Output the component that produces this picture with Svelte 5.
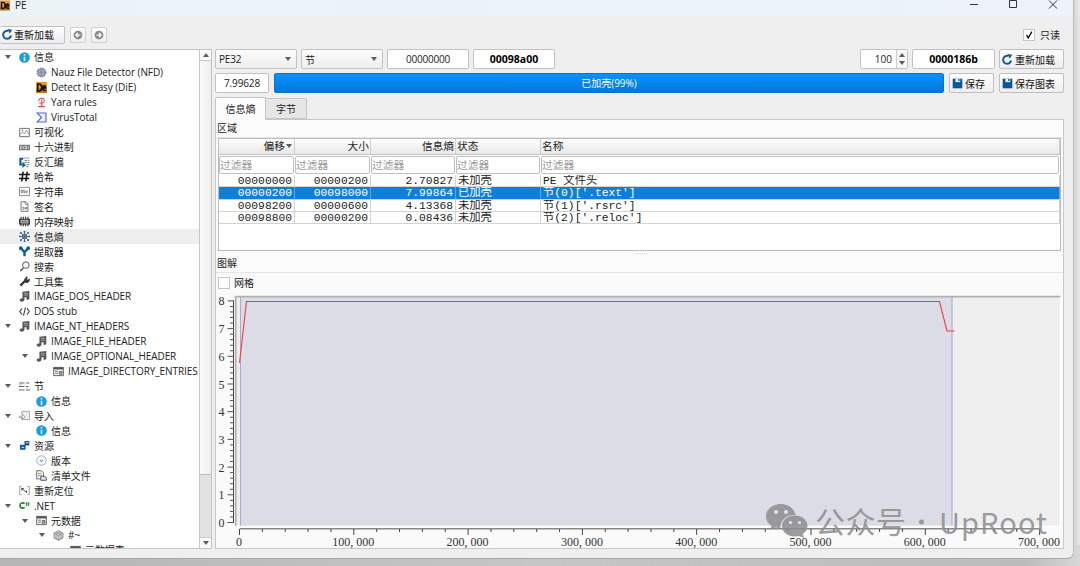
<script lang="ts">
  type Row = { t: string; icon: string; l?: number; open?: boolean; active?: boolean };

  const gear =
    '<circle cx="8" cy="8" r="5.5" fill="none" stroke="#8089a6" stroke-width="3.6" stroke-dasharray="2 .9"/><circle cx="8" cy="8" r="5" fill="#ccd1df" stroke="#56638b"/><circle cx="8" cy="8" r="2.4" fill="none" stroke="#56638b"/><path d="M8 3v10M3 8h10M4.5 4.5l7 7M11.5 4.5l-7 7" stroke="#6b7799" stroke-width=".6"/>';
  const header =
    '<path d="M5 1l10-1v12l-4 1V9H8v3c0 2-2 3.500-4 3.500S.8 14 1 12.700 3 11 5 11z" fill="#555"/><path d="M7 3.500h6M7 6h6" stroke="#aaa" stroke-width="1.300"/>';
  const table =
    '<path d="M1 2h14v12H1z" fill="#f4f4f4" stroke="#555" stroke-width="1.300"/><path d="M1 2h14v3H1z" fill="#555"/><path d="M3 7.500h4M3 10.500h4M9 8h4v4H9zM9 10h4" stroke="#555" fill="none" stroke-width="1.200"/>';
  const icons: Record<string, string> = {
    info: '<circle cx="8" cy="8" r="7.700" fill="#169fe6"/><path d="M8 7v6M8 3v2.200" stroke="#fff" stroke-width="2.200"/>',
    gear,
    header,
    table,
    die: '<path d="M0 0h16v16H0z" fill="#e99b20"/><path d="M0 9h16v7H0z" fill="#9b5610" opacity=".45"/><path d="M2.500 3v10h2c5 0 5-10 0-10zM10 8.500h4c0-4-4.500-3.500-4.500 0s2 4.500 5 3.500" fill="none" stroke="#150e04" stroke-width="2.300"/>',
    yara: '<path d="M4 6c0-6 9-5 8 0-1 3-6 4-7 2M9 3c-3 3 2 6-1 9M3 14h10M7 11l3 3" fill="none" stroke="#d45050" stroke-width="1.500"/>',
    vt: '<path d="M1.500 1.500h13v13h-13L8 8z" fill="#eef1ff" stroke="#5068ee" stroke-width="1.700"/>',
    picture: '<path d="M1 2h14v12H1z" fill="none" stroke="#666" stroke-width="1.300"/><path d="M2 11l3-4 3 3 3-5 4 6" fill="none" stroke="#666"/><circle cx="5" cy="5" r="1" fill="#666"/>',
    hex: '<path d="M0 4h16v8H0z" fill="#777"/><path d="M2 6h2v4H2zM6.500 6v4M9 6h2v4H9zM13.500 6v4" stroke="#e8e8e8" fill="none"/>',
    disasm: '<path d="M6 2.500H2V11h3" fill="none" stroke="#0a58a8" stroke-width="3"/><path d="M5 7l5 4.500L5 16z" fill="#0a58a8"/><path d="M6 1.500h9M8 5h7M8 8h7M11 11h4M10 14h5" stroke="#777" stroke-width="1.300" stroke-dasharray="4 1"/>',
    hash: '<path d="M6 1L4 15M12 1l-2 14M0 5h16M0 11h15" stroke="#111" stroke-width="2.200"/>',
    abc: '<path d="M.7 2h14.600v12H.7z" fill="none" stroke="#777" stroke-width="1.200"/><path d="M3 6h2v4H3zM7 5v5h2V7H7M13 7h-2v3h2" fill="none" stroke="#666"/>',
    sign: '<path d="M3 1h7l3 3v11H3z" fill="none" stroke="#666" stroke-width="1.300"/><path d="M9 1v4h4" fill="none" stroke="#666"/><path d="M5 9h2v3H5M9 9v3l2-3v3" fill="none" stroke="#555"/>',
    chip: '<path d="M3 1v14M6.300 1v14M9.600 1v14M13 1v14" stroke="#444" stroke-width="1.800"/><path d="M0 4h16v8.500H0z" fill="#444"/><path d="M3 6.500h10v3.500H3z" fill="#777" stroke="#ddd"/>',
    entropy: '<path d="M8 0v16M0 8h16M2 2l12 12M14 2L2 14" stroke="#315777" stroke-width="1.100"/><circle cx="8" cy="8" r="3.500" fill="none" stroke="#315777" stroke-width="1.200"/><path d="M8 0v2M8 14v2M0 8h2M14 8h2M2 2l1.500 1.500M12.500 12.500L14 14M14 2l-1.500 1.500M2 14l1.500-1.500" stroke="#315777" stroke-width="2.500"/>',
    extract: '<path d="M2.500 3L8 9l5.500-6M8 8v7" stroke="#0a58a8" stroke-width="3.400" fill="none"/><circle cx="2.700" cy="3.200" r="2.700" fill="#0a58a8"/><circle cx="13.300" cy="3.200" r="2.700" fill="#0a58a8"/>',
    search: '<circle cx="10" cy="6" r="4.800" fill="#f8f8f8" stroke="#555" stroke-width="1.400"/><path d="M6.500 10L2 14.500" stroke="#444" stroke-width="2"/>',
    wrench: '<path d="M2 14l7-7" stroke="#333" stroke-width="3.200"/><path d="M8 5l3-4 1 1-1 3 2 1 2-2c1 4-2 7-6 5z" fill="#333" stroke="#333"/>',
    code: '<path d="M4.500 3.500L1 8l3.500 4.500M11.500 3.500L15 8l-3.500 4.500M9.500 2l-3 12" stroke="#444" stroke-width="1.600" fill="none"/>',
    sections: '<path d="M0 3h8M0 8h8M0 13h8M10 3h5M10 8h4M10 13h6" stroke="#666" stroke-width="1.500"/><path d="M0 5.500h5M10 10.500h3" stroke="#aaa"/>',
    import: '<path d="M4 2h11.500v12H4M4 2v4M4 10v4" fill="#eee" stroke="#888"/><path d="M0 9h5V6l4 4-4 4v-3H0z" fill="#f5f5f5" stroke="#888"/>',
    resource: '<path d="M8 1.500h7V8H8zM1.500 7h8v7h-8z" fill="#0a58a8"/><path d="M10.500 4h3M4 10.500h3" stroke="#fff" stroke-width="1.500"/>',
    version: '<circle cx="8" cy="8" r="6.800" fill="none" stroke="#9a86df" stroke-width="1.200"/><path d="M5.500 7L8 9.500 10.500 7" fill="none" stroke="#42b883" stroke-width="1.600"/>',
    manifest: '<path d="M1 1h7l3 3v9H1z" fill="#f1f1f1" stroke="#666" stroke-width="1.300"/><path d="M3 5h5M3 8h5" stroke="#777"/><path d="M7 9h5l3 2v4H7z" fill="#ddd" stroke="#444" stroke-width="1.200"/>',
    reloc: '<path d="M4 2H1v12h3M12 2h3v12h-3" fill="none" stroke="#777"/><path d="M4 5l7 6M4 5v3M4 5h3M11 11V8" fill="none" stroke="#333" stroke-width="1.300"/>',
    csharp: '<path d="M8 5.500C6 3 1.500 4 1.500 8S6 13 8 10.500" fill="none" stroke="#16862b" stroke-width="2.500"/><path d="M11 3v6M14 3v6M9.500 4.700h6M9.500 7.300h6" stroke="#16862b"/>',
    cube: '<path d="M8 1l6.500 3.500v7L8 15l-6.500-3.500v-7z" fill="#d5d5d5" stroke="#666"/><path d="M1.500 4.500L8 8l6.500-3.500M8 8v7M4.500 3l7 3.500v7M11.500 3l-7 3.500v7" fill="none" stroke="#777" stroke-width=".8"/>',
    reload: '<path d="M13.200 9.500A5.800 5.800 0 1 1 9 2.800" fill="none" stroke="#14569b" stroke-width="2.800"/><path d="M8 0l7 1-4 6z" fill="#14569b"/>',
    save: '<path d="M1 1h14v14H1z" fill="#0856a0"/><path d="M5 1h7v5H5z" fill="#f3f6fb"/><path d="M9 1.500h2v3H9z" fill="#0856a0"/>',
    left: '<circle cx="8" cy="8" r="7" fill="#888"/><path d="M12 8H5M8 4.500L4.500 8 8 11.500" fill="none" stroke="#fff" stroke-width="2"/>',
    right: '<circle cx="8" cy="8" r="7" fill="#888"/><path d="M4 8h7M8 4.500L11.500 8 8 11.500" fill="none" stroke="#fff" stroke-width="2"/>'
  };

  const tree: Row[] = [
    { t: '信息', icon: 'info', open: true },
    { t: 'Nauz File Detector (NFD)', icon: 'gear', l: 1 },
    { t: 'Detect It Easy (DiE)', icon: 'die', l: 1 },
    { t: 'Yara rules', icon: 'yara', l: 1 },
    { t: 'VirusTotal', icon: 'vt', l: 1 },
    { t: '可视化', icon: 'picture' },
    { t: '十六进制', icon: 'hex' },
    { t: '反汇编', icon: 'disasm' },
    { t: '哈希', icon: 'hash' },
    { t: '字符串', icon: 'abc' },
    { t: '签名', icon: 'sign' },
    { t: '内存映射', icon: 'chip' },
    { t: '信息熵', icon: 'entropy', active: true },
    { t: '提取器', icon: 'extract' },
    { t: '搜索', icon: 'search' },
    { t: '工具集', icon: 'wrench' },
    { t: 'IMAGE_DOS_HEADER', icon: 'header' },
    { t: 'DOS stub', icon: 'code' },
    { t: 'IMAGE_NT_HEADERS', icon: 'header', open: true },
    { t: 'IMAGE_FILE_HEADER', icon: 'header', l: 1 },
    { t: 'IMAGE_OPTIONAL_HEADER', icon: 'header', l: 1, open: true },
    { t: 'IMAGE_DIRECTORY_ENTRIES', icon: 'table', l: 2 },
    { t: '节', icon: 'sections', open: true },
    { t: '信息', icon: 'info', l: 1 },
    { t: '导入', icon: 'import', open: true },
    { t: '信息', icon: 'info', l: 1 },
    { t: '资源', icon: 'resource', open: true },
    { t: '版本', icon: 'version', l: 1 },
    { t: '清单文件', icon: 'manifest', l: 1 },
    { t: '重新定位', icon: 'reloc' },
    { t: '.NET', icon: 'csharp', open: true },
    { t: '元数据', icon: 'table', l: 1, open: true },
    { t: '#~', icon: 'cube', l: 2, open: true },
    { t: '元数据表', icon: 'table', l: 3 }
  ];

  const columns = ['偏移', '大小', '信息熵', '状态', '名称'];
  const regions = [
    ['00000000', '00000200', '2.70827', '未加壳', 'PE 文件头'],
    ['00000200', '00098000', '7.99864', '已加壳', "节(0)['.text']"],
    ['00098200', '00000600', '4.13368', '未加壳', "节(1)['.rsrc']"],
    ['00098800', '00000200', '0.08436', '未加壳', "节(2)['.reloc']"]
  ];
  let selected = 1;

  // chart scale, in pixels of the chart svg
  const x0 = 23.5;
  const y0 = 230.5;
  const xStep = 114.3;
  const yStep = 27.7;
  const yTicks = Array.from({ length: 41 }, (_, i) => i);
  const xTicks = Array.from({ length: 36 }, (_, i) => i);
  const xLabels = ['0', '100,000', '200,000', '300,000', '400,000', '500,000', '600,000', '700,000'];

  function cells(text: string, mid: number) {
    return [...text].map((_, i) => mid - text.length * 3 + i * 6).join(' ');
  }
</script>

{#snippet icon(name: string)}
  <svg class="icon" viewBox="0 0 16 16">{@html icons[name]}</svg>
{/snippet}

<div class="desktop">
  <div class="window">
    <header class="titlebar">
      <span class="logo">{@render icon('die')}</span>
      <span class="title">PE</span>
      <svg class="controls" width="100" height="17" viewBox="0 0 100 17">
        <path d="M1 4.500h8M40.500 .5h7v7h-7zM80 .5l8 8M88 .5l-8 8" fill="none" stroke="#333" />
      </svg>
    </header>

    <div class="toolbar">
      <button class="btn reload">{@render icon('reload')}重新加载</button>
      <button class="btn nav">{@render icon('left')}</button>
      <button class="btn nav">{@render icon('right')}</button>
      <label class="readonly">
        <span class="check"><svg viewBox="0 0 12 12"><path d="M3 6l2 3.500L9.500 2" fill="none" stroke="#000" stroke-width="1.500" /></svg></span>
        只读
      </label>
    </div>

    <div class="body">
      <aside class="side">
        <div class="tree">
          {#each tree as row}
            <div class="node" class:active={row.active} style={`padding-left: ${4 + (row.l ?? 0) * 17}px`}>
              <span class="arrow">{#if row.open}<i class="tri"></i>{/if}</span>
              {@render icon(row.icon)}
              <span class="label">{row.t}</span>
            </div>
          {/each}
        </div>
        <div class="scroll">
          <div class="end"><i class="tri up"></i></div>
          <div class="thumb"></div>
          <div class="track"></div>
          <div class="end last"><i class="tri"></i></div>
        </div>
      </aside>

      <main>
        <div class="line">
          <div class="combo">PE32<i class="tri"></i></div>
          <div class="combo">节<i class="tri"></i></div>
          <div class="input mid">00000000</div>
          <div class="input mid strong">00098a00</div>
          <div class="spin">
            <span>100</span>
            <div class="steps"><i class="tri up"></i><i class="tri"></i></div>
          </div>
          <div class="input wide strong">0000186b</div>
          <button class="btn large">{@render icon('reload')}重新加载</button>
        </div>
        <div class="line second">
          <div class="input short">7.99628</div>
          <div class="progress">已加壳(99%)</div>
          <button class="btn small">{@render icon('save')}保存</button>
          <button class="btn large">{@render icon('save')}保存图表</button>
        </div>

        <div class="tabs">
          <div class="tab current">信息熵</div>
          <div class="tab">字节</div>
        </div>

        <section class="panel">
          <h3>区域</h3>
          <div class="grid">
            <div class="tr head">
              {#each columns as col, i}
                <span>{col}{#if i === 0}<i class="tri"></i>{/if}</span>
              {/each}
            </div>
            <div class="tr filters">
              {#each columns as _}
                <span>过滤器</span>
              {/each}
            </div>
            {#each regions as region, i}
              <div class="tr data" class:selected={i === selected}>
                {#each region as value}
                  <span>{value}</span>
                {/each}
              </div>
            {/each}
          </div>
          <div class="splitter"></div>
          <h3 class="second-title">图解</h3>
          <div class="options"><span class="box"></span>网格</div>

          <svg class="chart" width="848" height="256" viewBox="0 0 848 256">
            <rect x="20" y="4" width="824" height="230" fill="#efefef" />
            <rect x="24.500" y="5" width="712" height="229" fill="#dcdce6" />
            <path d="M24.500 5V234M736 5V234" stroke="#a9a9d2" />
            <path d="M19.700 234V4.700H844.500" fill="none" stroke="#b0b0b0" stroke-width="1.700" />
            <path d="M20 234.500H844.500V5" fill="none" stroke="#fff" stroke-width="1.500" />
            <polyline points="23.500,71 30.500,9.500 723.500,9.500 731,39 738.500,39" fill="none" stroke="#f23c44" stroke-width="1.100" />
            <path d={`M17.500 ${y0 + 0.5}V8.500`} stroke="#444" />
            {#each yTicks as i}
              <path d={`M${i % 5 ? 14 : 11.5} ${y0 - (i * yStep) / 5}H18`} stroke="#555" />
              {#if i % 5 === 0}
                <text class="axis" x="2.500" y={y0 + 4.5 - (i * yStep) / 5}>{i / 5}</text>
              {/if}
            {/each}
            <path d={`M${x0} 236.800H${x0 + xStep * 7}`} stroke="#888" stroke-width="1.400" />
            {#each xTicks as i}
              <path d={`M${x0 + (i * xStep) / 5} 237v${i % 5 ? 3 : 6}`} stroke="#444" />
            {/each}
            {#each xLabels as text, i}
              <text class="axis" x={cells(text, x0 - 0.5 + i * xStep)} y="253.500">{text}</text>
            {/each}
          </svg>
        </section>
      </main>
    </div>
  </div>

  <svg class="watermark" width="290" height="46" viewBox="0 0 290 46">
    <g fill="#8d8d91" fill-rule="evenodd" opacity=".85">
      <path d="M16 5C7.500 5 1 10.500 1 17.500c0 4 2 7 5.500 9.500L5 31l5.500-2.500 5 1c-.7-9 6.500-14 15-13.500C29 9 23 5 16 5z" />
      <path d="M30 16.500c-7.500 0-13 4.600-13 10.500s5.500 10.500 13 10.500l4-.6 5 2-1.200-4c3-2 4.700-4.700 4.700-7.900 0-5.900-5.500-10.500-12.500-10.500z" />
    </g>
    <g fill="#e4e4e8">
      <circle cx="11" cy="13" r="2" /><circle cx="21" cy="13" r="2" />
      <circle cx="25.500" cy="23.500" r="1.600" /><circle cx="34.500" cy="23.500" r="1.600" />
    </g>
    <g fill="#8d8d91" opacity=".85">
      <text x="50" y="34" font-size="30" textLength="91">公众号</text>
      <circle cx="156.500" cy="23" r="2.500" />
      <text x="174" y="34.500" font-size="29" textLength="108">UpRoot</text>
    </g>
  </svg>
</div>

<style>
  :global(body) {
    margin: 0;
    overflow: hidden;
  }

  .desktop {
    position: relative;
    width: 1080px;
    height: 566px;
    overflow: hidden;
    background: linear-gradient(90deg, #b5b5b5, #c6c6c6 50%, #bbb 95%, #d8d8d8);
    font: 10px 'Open Sans', 'Noto Sans CJK SC', sans-serif;
    color: #222;
  }

  .desktop * {
    box-sizing: border-box;
  }

  .desktop::before {
    content: '';
    position: absolute;
    right: 0;
    top: 0;
    width: 7px;
    height: 545px;
    background: linear-gradient(90deg, #d3d3d3, #e8e8e8);
  }

  .window {
    position: relative;
    width: 1074px;
    height: 559px;
    border-right: 1px solid #bbb;
    border-bottom: 1px solid #a8a8a8;
    border-bottom-right-radius: 7px;
    background: #efefef;
    overflow: hidden;
  }

  .titlebar {
    display: flex;
    align-items: flex-start;
    height: 17px;
    background: linear-gradient(90deg, #eaf4f7, #edf2fb);
  }

  .logo .icon {
    display: block;
    width: 10px;
    height: 11px;
    margin: 0;
  }

  .title {
    margin-left: 5px;
    font-size: 10px;
    line-height: 10px;
    flex: 1;
  }

  .controls {
    margin-right: 4px;
  }

  .icon {
    flex: none;
    width: 11px;
    height: 11px;
    margin: 0 -0.5px;
  }

  .toolbar {
    display: flex;
    align-items: center;
    height: 32px;
    padding: 3px 13px 0 0;
    gap: 5px;
  }

  .btn {
    display: flex;
    align-items: center;
    gap: 3px;
    height: 20px;
    padding: 0 0 0 2px;
    border: 1px solid #c0c0c0;
    border-radius: 2px;
    background: linear-gradient(#fdfdfd, #eee);
    font: inherit;
    color: #111;
    white-space: nowrap;
  }

  .reload {
    width: 65px;
    height: 18px;
    border-left: 0;
    padding-left: 2px;
    gap: 2px;
  }

  .nav {
    width: 16px;
    height: 16px;
    padding: 0;
    justify-content: center;
    border-color: #d0d0d0;
  }

  .nav .icon {
    width: 10px;
    height: 10px;
  }

  .readonly {
    display: flex;
    align-items: center;
    gap: 5px;
    margin-left: auto;
  }

  .check,
  .box {
    width: 12px;
    height: 12px;
    border: 1px solid #c6c6c6;
    background: #fff;
  }

  .check svg {
    display: block;
    width: 10px;
    height: 10px;
  }

  .body {
    display: flex;
    height: 500px;
    gap: 3px;
  }

  .side {
    display: flex;
    width: 212px;
    border: 1px solid #c4c4c4;
    border-left: 0;
    background: #fff;
  }

  .tree {
    width: 199px;
    overflow: hidden;
  }

  .node {
    display: flex;
    align-items: center;
    height: 14.95px;
    white-space: nowrap;
  }

  .active {
    background: #efefef;
  }

  .arrow {
    display: flex;
    width: 15px;
    padding-left: 1px;
  }

  .label {
    margin-left: 5px;
    line-height: 14px;
    letter-spacing: -0.08px;
  }

  .tri {
    display: block;
    width: 0;
    height: 0;
    border: 3.5px solid transparent;
    border-top: 4px solid #5c5c5c;
    border-bottom: 0;
  }

  .tri.up {
    border-top: 0;
    border-bottom: 4px solid #5c5c5c;
  }

  .scroll {
    display: flex;
    flex-direction: column;
    width: 12px;
    border-left: 1px solid #c8c8c8;
  }

  .end {
    display: flex;
    align-items: center;
    justify-content: center;
    height: 11px;
    border-bottom: 1px solid #ccc;
    background: #fafafa;
  }

  .end.last {
    border-top: 1px solid #ccc;
    border-bottom: 0;
  }

  .thumb {
    height: 414px;
    background: linear-gradient(90deg, #fbfbfb, #eee);
    border-bottom: 1px solid #bbb;
  }

  .track {
    flex: 1;
    background: #e2e2e2;
  }

  main {
    width: 849px;
  }

  .line {
    display: flex;
    height: 20px;
    gap: 4px;
  }

  .second {
    margin-top: 4px;
    gap: 5px;
  }

  .combo,
  .input,
  .spin {
    display: flex;
    align-items: center;
    border: 1px solid #c2c2c2;
    border-radius: 2px;
    background: #fff;
  }

  .combo {
    width: 82px;
    padding: 0 5px 0 3px;
    justify-content: space-between;
    background: linear-gradient(#fcfcfc, #eee);
    letter-spacing: -0.2px;
  }

  .input {
    justify-content: center;
    letter-spacing: -0.2px;
  }

  .mid {
    width: 82px;
  }

  .wide {
    width: 83px;
  }

  .short {
    width: 54px;
    letter-spacing: -0.1px;
  }

  .strong {
    font-size: 10.5px;
    font-weight: bold;
    letter-spacing: 0;
    color: #000;
  }

  .spin {
    width: 48px;
    margin-left: auto;
  }

  .spin span {
    flex: 1;
    padding-right: 4px;
    text-align: right;
  }

  .steps {
    display: flex;
    flex-direction: column;
    justify-content: center;
    align-items: center;
    gap: 4px;
    width: 11px;
    height: 100%;
    border-left: 1px solid #ccc;
    background: #f7f7f7;
  }

  .steps .tri {
    border-left-width: 3px;
    border-right-width: 3px;
  }

  .progress {
    flex: 1;
    border: 1px solid #0873c8;
    border-radius: 2px;
    background: linear-gradient(#0a92ff, #0078dc);
    color: #fff;
    text-align: center;
    line-height: 18px;
  }

  .small {
    width: 45px;
  }

  .large {
    width: 65px;
  }

  .tabs {
    display: flex;
    align-items: flex-end;
    height: 26px;
    padding-top: 4px;
  }

  .tab {
    width: 41px;
    height: 21px;
    border: 1px solid #c6c6c6;
    border-left: 0;
    border-radius: 0 2px 0 0;
    background: #e6e6e6;
    text-align: center;
    line-height: 21px;
  }

  .current {
    position: relative;
    width: 51px;
    height: 23px;
    margin-bottom: -1px;
    border-left: 1px solid #c6c6c6;
    border-bottom: 0;
    border-radius: 2px 2px 0 0;
    background: #fcfcfc;
    line-height: 23px;
  }

  .panel {
    height: 430px;
    border: 1px solid #c8c8c8;
    background: #fafafa;
  }

  h3 {
    margin: 0;
    height: 18px;
    padding-left: 1px;
    font: inherit;
    line-height: 16px;
    background: #fcfcfc;
    border-bottom: 1px solid #e4e4e4;
  }

  .grid {
    width: 843px;
    height: 113px;
    margin-left: 2px;
    border: 1px solid #bcbcbc;
    background: #fff;
    font-size: 10.7px;
  }

  .tr {
    display: grid;
    grid-template-columns: 76px 76px 85px 85px 1fr;
  }

  .head {
    height: 16px;
    background: linear-gradient(#fdfdfd, #e8e8e8);
    border-bottom: 1px solid #c4c4c4;
    line-height: 15px;
  }

  .head span {
    padding: 0 1px;
    border-right: 1px solid #d0d0d0;
  }

  .head span:nth-child(-n + 3),
  .data span:nth-child(-n + 3) {
    text-align: right;
  }

  .head .tri {
    display: inline-block;
    margin: 0 1px 2px 1px;
  }

  .filters {
    height: 20px;
    padding: 1px 1px 1px 0;
    column-gap: 1px;
    grid-template-columns: 75px 75px 84px 84px 1fr;
    color: #999;
  }

  .filters span {
    border: 1px solid #c0c0c0;
    border-radius: 2px;
    padding-left: 0;
    line-height: 16px;
  }

  .data {
    height: 12.3px;
    border-bottom: 1px solid #d3d3d3;
    font: 11.3px/12px 'Liberation Mono', 'Noto Sans CJK SC', monospace;
    white-space: pre;
  }

  .data span {
    border-right: 1px solid #d3d3d3;
    padding: 0 2px;
    height: 12px;
    overflow: hidden;
  }

  .selected {
    background: #0e7fdc;
    color: #fff;
  }

  .selected span {
    border-color: #58a6e8;
  }

  .splitter {
    width: 11px;
    height: 6px;
    margin-left: 420px;
    border-bottom: 1px dotted #ccc;
    transform: translateY(-3px);
  }

  .second-title {
    height: 16px;
    line-height: 13px;
  }

  .options {
    display: flex;
    align-items: center;
    gap: 4px;
    height: 19px;
    padding-left: 2px;
  }

  .chart {
    display: block;
  }

  .axis {
    font: 12px 'Liberation Serif', serif;
    fill: #333;
  }

  .watermark {
    position: absolute;
    left: 765px;
    top: 499px;
    font-family: 'Noto Sans CJK SC', sans-serif;
  }
</style>
